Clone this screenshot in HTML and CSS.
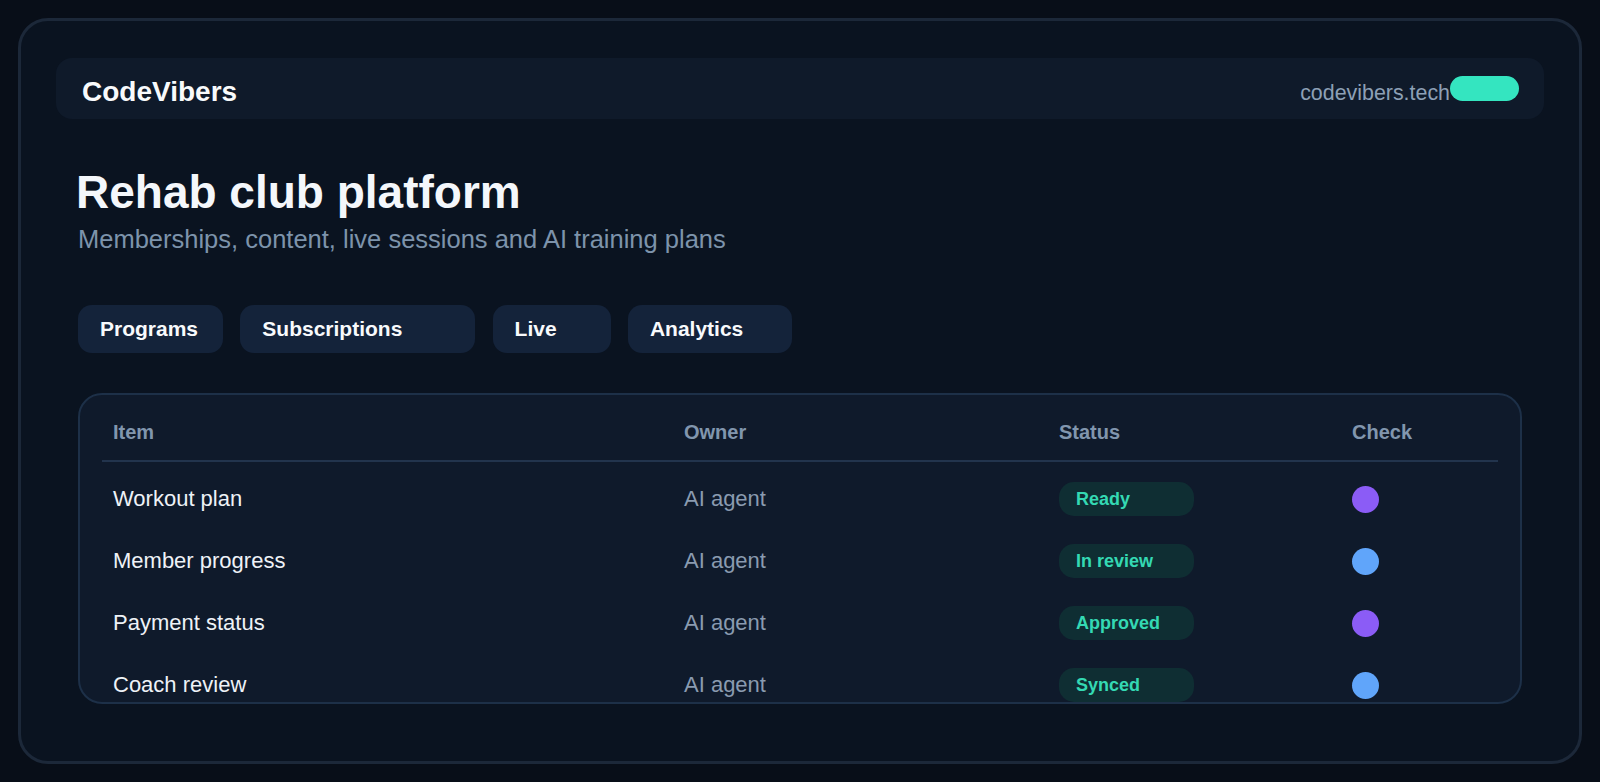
FILE: index.html
```html
<!DOCTYPE html>
<html lang="en">
<head>
<meta charset="utf-8">
<title>CodeVibers – Rehab club platform</title>
<link rel="stylesheet" href="styles.css">
</head>
<body>
<div class="frame">
  <header class="topbar">
    <div class="logo">CodeVibers</div>
    <div class="site">codevibers.tech<span class="pill"></span></div>
  </header>
  <main class="main">
    <h1 class="title">Rehab club platform</h1>
    <p class="subtitle">Memberships, content, live sessions and AI training plans</p>
    <nav class="tabs">
      <div class="tab tab-programs">Programs</div>
      <div class="tab tab-subs">Subscriptions</div>
      <div class="tab tab-live">Live</div>
      <div class="tab tab-analytics">Analytics</div>
    </nav>
    <section class="card">
      <table class="grid">
        <colgroup>
          <col class="c-item"><col class="c-owner"><col class="c-status"><col class="c-check">
        </colgroup>
        <thead>
          <tr><th>Item</th><th>Owner</th><th>Status</th><th>Check</th></tr>
        </thead>
        <tbody>
          <tr>
            <td class="item">Workout plan</td>
            <td class="owner">AI agent</td>
            <td><span class="badge">Ready</span></td>
            <td><span class="dot dot-purple"></span></td>
          </tr>
          <tr>
            <td class="item">Member progress</td>
            <td class="owner">AI agent</td>
            <td><span class="badge">In review</span></td>
            <td><span class="dot dot-blue"></span></td>
          </tr>
          <tr>
            <td class="item">Payment status</td>
            <td class="owner">AI agent</td>
            <td><span class="badge">Approved</span></td>
            <td><span class="dot dot-purple"></span></td>
          </tr>
          <tr>
            <td class="item">Coach review</td>
            <td class="owner">AI agent</td>
            <td><span class="badge">Synced</span></td>
            <td><span class="dot dot-blue"></span></td>
          </tr>
        </tbody>
      </table>
    </section>
  </main>
</div>
</body>
</html>
```
FILE: styles.css
```css
* { box-sizing: border-box; }

html, body {
  margin: 0;
  height: 100%;
}

body {
  background: #080e18;
  padding: 18px;
  font-family: "Liberation Sans", Arial, sans-serif;
  color: #f1f5f9;
}

.frame {
  height: calc(100vh - 36px);
  border: 3px solid #1c2839;
  border-radius: 30px;
  background: #0a1320;
  padding: 37px 35px 57px;
  display: flex;
  flex-direction: column;
}

.topbar {
  height: 61px;
  flex: none;
  display: flex;
  justify-content: space-between;
  align-items: flex-start;
  padding: 18px 25px 0 26px;
  background: #0f1a2a;
  border-radius: 16px;
}

.logo {
  font-weight: 700;
  font-size: 28px;
  color: #f8fafc;
}

.site {
  font-size: 21.4px;
  color: #8da0b6;
}

.pill {
  display: inline-block;
  width: 69px;
  height: 25px;
  border-radius: 13px;
  background: #34e5c0;
  vertical-align: -1px;
}

.main {
  flex: 1;
  min-height: 0;
  display: flex;
  flex-direction: column;
  padding: 0 22px;
}

.title {
  margin: 46px 0 0 -2px;
  font-size: 46px;
  font-weight: 700;
  color: #f4f7fb;
}

.subtitle {
  margin: 6px 0 0;
  font-size: 25.5px;
  color: #7d93ab;
}

.tabs {
  display: flex;
  gap: 17.3px;
  margin-top: 51px;
}

.tab {
  height: 48px;
  display: flex;
  align-items: center;
  padding: 0 22px;
  border-radius: 14px;
  background: #14233a;
  font-size: 21px;
  font-weight: 700;
  color: #f8fafc;
}

.tab-programs { width: 145px; }
.tab-subs { width: 235px; }
.tab-live { width: 118px; }
.tab-analytics { width: 164px; }

.card {
  flex: 1;
  min-height: 0;
  overflow: hidden;
  margin-top: 40px;
  border: 2px solid #1d3048;
  border-radius: 24px;
  background: #0f1a2b;
  padding: 15px 22px 0;
}

.grid {
  width: 100%;
  table-layout: fixed;
  border-collapse: collapse;
}

.c-item { width: 571px; }
.c-owner { width: 376px; }
.c-status { width: 293px; }
.c-check { width: auto; }

.grid th {
  text-align: left;
  padding: 11px 11px 16px;
  font-size: 20px;
  font-weight: 700;
  color: #8196ae;
  border-bottom: 2px solid #22344d;
}

.grid td {
  padding: 14px 11px;
  font-size: 22px;
  vertical-align: middle;
}

.grid th:nth-child(3),
.grid th:nth-child(4),
.grid td:nth-child(3),
.grid td:nth-child(4) {
  padding-left: 10px;
}

.grid tbody tr:first-child td {
  padding-top: 20px;
}

.item { color: #eef2f7; }
.owner { color: #8a9bb0; }

.badge {
  display: flex;
  align-items: center;
  width: 135px;
  height: 34px;
  padding-left: 17px;
  border-radius: 15px;
  background: #0f2e33;
  color: #34d9b3;
  font-size: 18px;
  font-weight: 700;
}

.dot {
  display: block;
  width: 27px;
  height: 27px;
  border-radius: 50%;
}

.dot-purple { background: #8b5cf6; }
.dot-blue { background: #60a5fa; }
```
